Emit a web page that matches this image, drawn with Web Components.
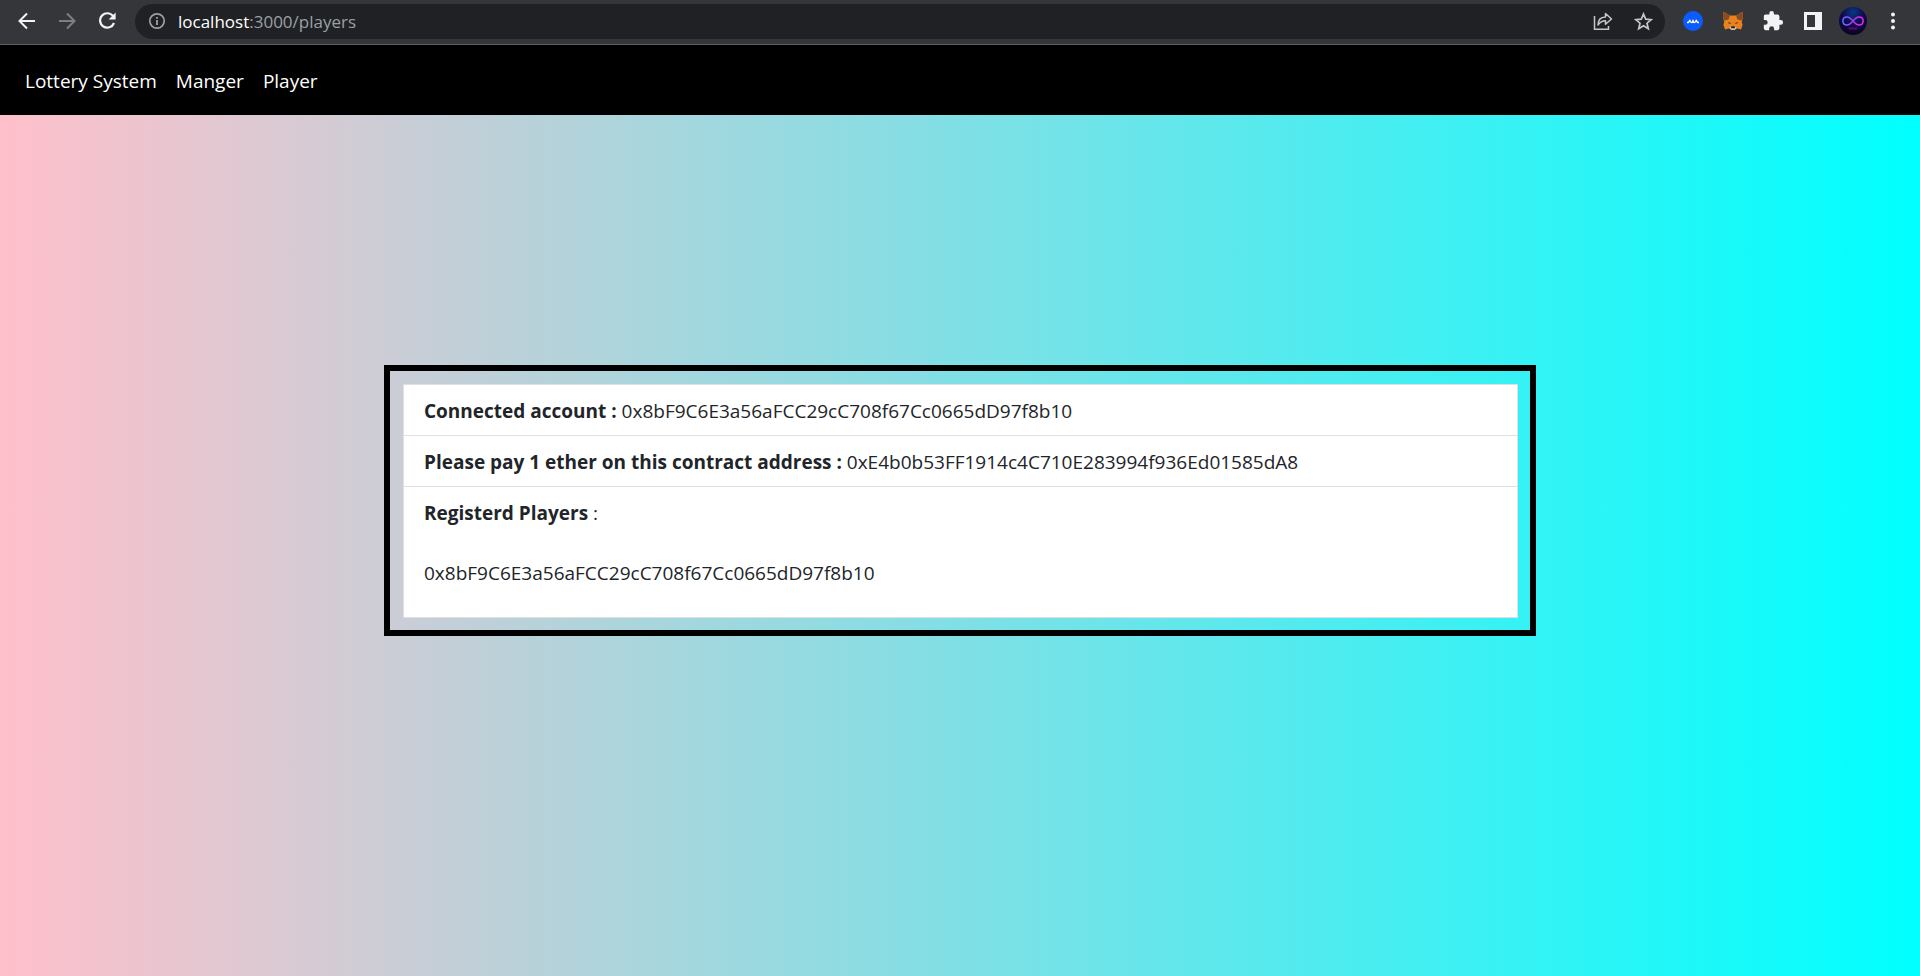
<!DOCTYPE html>
<html lang="en">
<head>
<meta charset="utf-8">
<title>Lottery System</title>
<style>
  html, body { margin: 0; height: 100%; }
  body { font-family: "Open Sans", "Noto Sans", sans-serif; }
</style>
</head>
<body>
<lottery-app></lottery-app>

<template id="toolbar-template">
  <style>
    :host { display: flex; align-items: center; box-sizing: border-box; height: 45px; padding: 0 13px 2px 13px; background: #35363a; border-bottom: 1px solid #5f6064; color: #f1f3f4; }
    button { display: grid; place-items: center; width: 28px; height: 28px; padding: 0; border: 0; background: none; color: inherit; border-radius: 50%; }
    svg { display: block; }
    .history { display: flex; gap: 12px; }
    .history button:disabled { color: #7e7f83; }
    .address { display: flex; flex: 1; align-items: center; min-width: 0; height: 35px; box-sizing: border-box; margin: 0 14px; padding: 0 8px; border-radius: 18px; background: #202124; color: #9aa0a6; }
    .url { flex: 1; min-width: 0; margin-left: 7px; padding-top: 2px; font-size: 17px; line-height: 24px; color: #9aa0a6; white-space: nowrap; }
    .url b { font-weight: 400; color: #fff; }
    .page { display: flex; gap: 12px; color: #c4c7c9; }
    .actions { display: flex; gap: 12px; }
  </style>
  <div class="history">
    <button aria-label="Back"><svg width="18" height="18" viewBox="0 0 18 18" fill="none" stroke="currentColor" stroke-width="2"><path d="M17 9H2M9 1.500L1.500 9L9 16.500"/></svg></button>
    <button aria-label="Forward" disabled><svg width="18" height="18" viewBox="0 0 18 18" fill="none" stroke="currentColor" stroke-width="2"><path d="M1 9H16M9 1.500L16.500 9L9 16.500"/></svg></button>
    <button aria-label="Reload"><svg width="18" height="18" viewBox="0 0 18 18"><path d="M15.300 4.500A7.200 7.200 0 1 0 16 11" fill="none" stroke="currentColor" stroke-width="2.200"/><path d="M17.600 .5V7.500H10.600Z" fill="currentColor"/></svg></button>
  </div>
  <div class="address">
    <button aria-label="Site information"><svg width="18" height="18" viewBox="0 0 18 18"><circle cx="9" cy="9" r="7.200" fill="none" stroke="currentColor" stroke-width="1.700"/><path d="M8.100 8H9.900V13H8.100ZM8.100 5H9.900V6.700H8.100Z" fill="currentColor"/></svg></button>
    <span class="url"><b>localhost</b>:3000/players</span>
    <div class="page">
      <button aria-label="Share"><svg width="20" height="20" viewBox="0 0 20 20" fill="none" stroke="currentColor" stroke-width="1.500"><path d="M1.500 5V18.200H15.500V15"/><path d="M5 14C5 9 8 6.200 12.500 6V2.500L18.500 8L12.500 13.200V9.800C9 9.800 7 11 5 14Z" stroke-linejoin="round"/></svg></button>
      <button aria-label="Bookmark"><svg width="19" height="19" viewBox="0 0 19 19" fill="none" stroke="currentColor" stroke-width="1.700"><path d="M9.500 2L11.700 7.100L17.200 7.600L13 11.200L14.300 16.700L9.500 13.800L4.700 16.700L6 11.200L1.800 7.600L7.300 7.100Z"/></svg></button>
    </div>
  </div>
  <div class="actions">
    <button aria-label="Wallet extension"><svg width="20" height="20" viewBox="0 0 20 20"><circle cx="10" cy="10" r="10" fill="#0a5cff"/><path d="M4 11.500H5.500L6.800 9.200C7.200 12.200 9.600 12.200 10 9.300C10.400 12.200 12.800 12.200 13.200 9.200L14.500 11.500H16" fill="none" stroke="#fff" stroke-width="1.400" stroke-linejoin="round"/></svg></button>
    <button aria-label="MetaMask"><svg width="20" height="20" viewBox="0 0 20 20"><path d="M.6 .8L7 4.400H13L19.400 .8L20 6L18.800 11L19.600 14L18 18.500L13.500 17.300L11.500 19H8.500L6.500 17.300L2 18.500L.4 14L1.200 11L0 6Z" fill="#e8821e"/><path d="M.6 .8L7 4.400L5.500 8.500L1.300 9.500L0 6ZM19.400 .8L13 4.400L14.500 8.500L18.700 9.500L20 6Z" fill="#8a4b22"/><path d="M5 11L8 12L7.600 12.800L5.800 12.400ZM15 11L12 12L12.400 12.800L14.200 12.400Z" fill="#4a3430"/><path d="M6.500 16.500L8.200 15.500H11.800L13.500 16.500V17.500L11.500 19H8.500L6.500 17.500Z" fill="#d7c1b3"/><path d="M8.300 15.300H11.700L12 17.200H8Z" fill="#202028"/></svg></button>
    <button aria-label="Extensions"><svg width="22" height="22" viewBox="0 0 24 24" fill="currentColor"><path d="M20.500 11H19V7c0-1.100-.9-2-2-2h-4V3.500a2.500 2.500 0 0 0-5 0V5H4c-1.100 0-2 .9-2 2v3.800h1.500a2.700 2.700 0 0 1 0 5.400H2V20c0 1.100.9 2 2 2h3.800v-1.500a2.700 2.700 0 0 1 5.400 0V22H17c1.100 0 2-.9 2-2v-4h1.500a2.500 2.500 0 0 0 0-5z"/></svg></button>
    <button aria-label="Side panel"><svg width="18" height="18" viewBox="0 0 18 18"><path d="M0 0H18V18H0ZM3 3V15H11V3Z" fill="currentColor" fill-rule="evenodd"/></svg></button>
    <button aria-label="Profile"><svg width="28" height="28" viewBox="0 0 28 28"><defs><radialGradient id="sky" cx=".5" cy=".2" r=".8"><stop offset="0" stop-color="#063a80"/><stop offset=".5" stop-color="#150650"/><stop offset="1" stop-color="#0a0420"/></radialGradient><linearGradient id="loop"><stop offset="0" stop-color="#4a7cff"/><stop offset=".5" stop-color="#a83cf0"/><stop offset="1" stop-color="#e02ce8"/></linearGradient></defs><circle cx="14" cy="14" r="14" fill="url(#sky)"/><path d="M14 14C11 10.500 9.500 10 8 10C2.500 10 2.500 18 8 18C9.500 18 11.500 17 14 14C16.500 11 18.500 10 20 10C25.500 10 25.500 18 20 18C18.500 18 16.500 17 14 14Z" fill="none" stroke="url(#loop)" stroke-width="1.500"/><path d="M9.500 21.500H18.500" stroke="#7a0f80" stroke-width="2" opacity=".7"/></svg></button>
    <button aria-label="Menu"><svg width="4" height="18" viewBox="0 0 4 18" fill="currentColor"><circle cx="2" cy="2.500" r="2"/><circle cx="2" cy="9" r="2"/><circle cx="2" cy="15.500" r="2"/></svg></button>
  </div>
</template>

<template id="nav-template">
  <style>
    :host { display: block; background: #000; }
    nav { display: flex; align-items: center; gap: 19px; padding: 21px 25px 19px; }
    ::slotted(a) { color: #fff; text-decoration: none; font-size: 19px; line-height: 30px; }
  </style>
  <nav><slot></slot></nav>
</template>

<template id="panel-template">
  <style>
    :host { display: block; box-sizing: border-box; width: 60%; padding: 13px 12px 12px 13px; border: 6px solid #000; }
    .list { border: 1px solid #dfdfdf; background: #fff; }
  </style>
  <div class="list"><slot></slot></div>
</template>

<template id="row-template">
  <style>
    :host { display: block; padding: 11px 20px 9px; border-bottom: 1px solid #dfdfdf; color: #212529; font-size: 19px; line-height: 30px; }
    :host(:last-child) { border-bottom: 0; }
  </style>
  <slot name="label"></slot> <slot></slot>
</template>

<template id="app-template">
  <style>
    :host { display: flex; flex-direction: column; min-height: 100%; }
    main { display: flex; flex: 1; flex-direction: column; align-items: center; padding-top: 250px; background: linear-gradient(to right, pink, cyan); }
    strong { font-weight: 680; }
    p { margin: 30px 0 20px; }
  </style>
  <browser-toolbar></browser-toolbar>
  <site-nav>
    <a href="#home">Lottery System</a>
    <a href="#manager">Manger</a>
    <a href="#players">Player</a>
  </site-nav>
  <main>
    <info-panel>
      <info-row><strong slot="label">Connected account :</strong>0x8bF9C6E3a56aFCC29cC708f67Cc0665dD97f8b10</info-row>
      <info-row><strong slot="label">Please pay 1 ether on this contract address :</strong>0xE4b0b53FF1914c4C710E283994f936Ed01585dA8</info-row>
      <info-row><strong slot="label">Registerd Players</strong>:<p>0x8bF9C6E3a56aFCC29cC708f67Cc0665dD97f8b10</p></info-row>
    </info-panel>
  </main>
</template>

<script>
  const define = (name) => {
    const template = document.getElementById(name.split("-")[1] + "-template");
    customElements.define(name, class extends HTMLElement {
      constructor() {
        super();
        this.attachShadow({ mode: "open" }).append(template.content.cloneNode(true));
      }
    });
  };
  ["browser-toolbar", "site-nav", "info-panel", "info-row", "lottery-app"].forEach(define);
</script>
</body>
</html>
